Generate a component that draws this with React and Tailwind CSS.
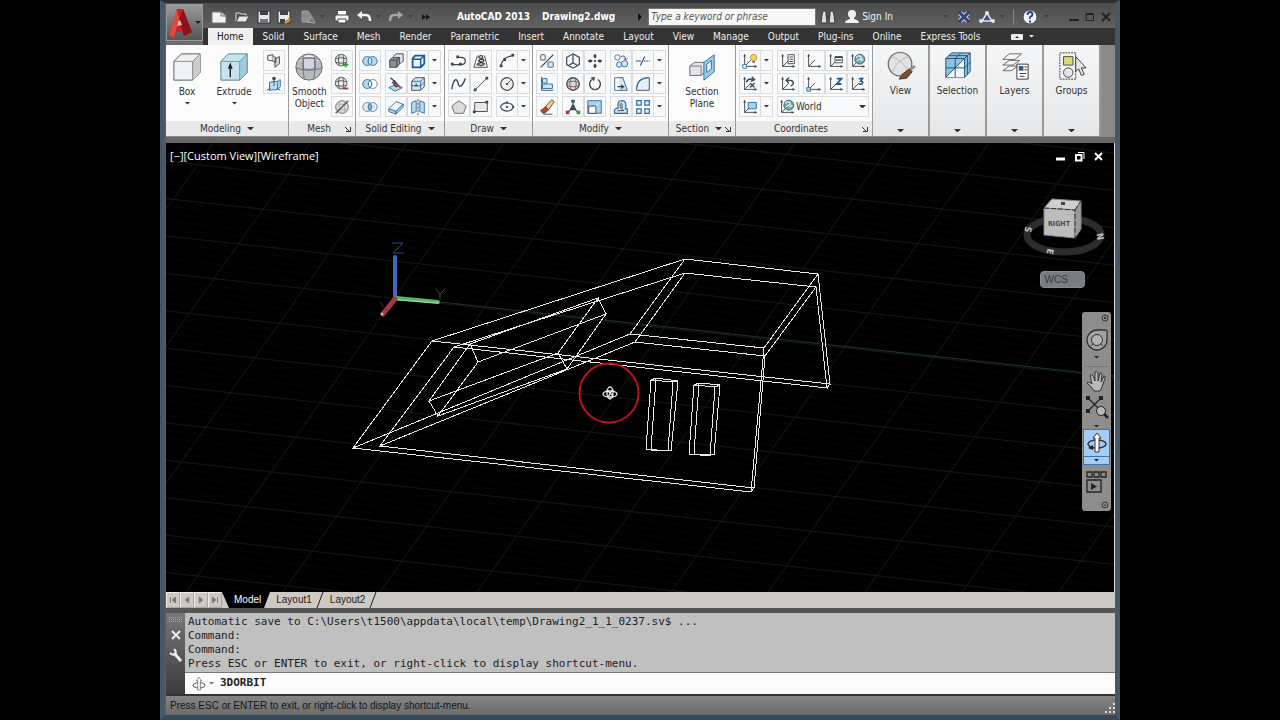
import React, { useState } from 'react';
import clsx from 'clsx';

const INK = '#3f444a';
const BLUE = '#2b6ca3';
const PALE = '#b9dcf0';

const axes = (
    <>
        <path d="M4 3v13h13M4 16l7-7" fill="none" stroke={INK} />
        <path d="M2.5 5L4 2l1.5 3zM15 14.5l3 1.5-3 1.5z" fill={INK} />
    </>
);

const meshBall = (
    <>
        <circle cx="9" cy="9" r="6.5" fill="#e6e7e8" stroke="#555" />
        <path d="M3 7.5q6-2.5 12 0M3 11.5q6 2 12 0M7 3q-2 6 0 12M11 3q2 6 0 12" fill="none" stroke="#555" />
    </>
);

const globe = (
    <>
        <circle cx="12" cy="8" r="5.5" fill="#6fa5ad" stroke="#3c5f70" />
        <path d="M8 6q3-3 5-1t-1 3-3 2M13 10q2-2 3-1" fill="none" stroke="#d8eee2" strokeWidth="1.5" />
    </>
);

const icons = {
    polysolid: (
        <>
            <path d="M3 4l6-1v7l-6-1z" fill="#eee" stroke={INK} />
            <path d="M9 5l3 1v6l-3-2M11 8l5-3v8l-5 4z" fill="#d5d7d9" stroke={INK} />
        </>
    ),
    presspull: (
        <>
            <path d="M5 8l9-1v9l-9 1zM14 7l3-2v8l-3 3" fill={PALE} stroke={BLUE} />
            <path d="M10 12V3M2 17l4-2M17 17l-3-2" fill="none" stroke={INK} />
            <circle cx="10" cy="4" r="2" fill={INK} />
        </>
    ),
    meshMore: (
        <>
            {meshBall}
            <path d="M14 11v6M11 14h6" stroke="#27a02c" strokeWidth="2" />
        </>
    ),
    meshLess: (
        <>
            {meshBall}
            <path d="M11 15h6" stroke="#b92a35" strokeWidth="2" />
        </>
    ),
    meshRefine: (
        <>
            <circle cx="10" cy="10" r="7" fill="#e2e2e2" stroke="#666" />
            <path d="M4 7h11M4 13h12M7 4v12M13 4v12" fill="none" stroke="#aaa" />
            <path d="M3 17L17 3" stroke="#555" strokeWidth="1.5" />
        </>
    ),
    union: (
        <>
            <circle cx="7" cy="10" r="5" fill="#b5d9f4" stroke={BLUE} />
            <circle cx="13" cy="10" r="5" fill="#b5d9f4" stroke={BLUE} />
            <ellipse cx="10" cy="10" rx="2" ry="4" fill="#d8ecfa" stroke={BLUE} />
        </>
    ),
    subtract: (
        <>
            <circle cx="13" cy="10" r="5" fill="#fff" stroke="#5d86ab" />
            <circle cx="7" cy="10" r="5" fill="#b5d9f4" stroke={BLUE} />
            <path d="M10 6q-4 4 0 8 4-4 0-8" fill="#fff" stroke={BLUE} />
        </>
    ),
    intersect: (
        <>
            <circle cx="7" cy="10" r="5" fill="#e4e9ed" stroke="#5d86ab" />
            <circle cx="13" cy="10" r="5" fill="#e4e9ed" stroke="#5d86ab" />
            <path d="M10 6q-4 4 0 8 4-4 0-8" fill="#7fb7e0" stroke={BLUE} />
        </>
    ),
    faces: (
        <>
            <path d="M7 5l3-3h8v8l-3 3" fill="#e4e4e4" stroke={INK} />
            <path d="M3 9l3-3h8v7l-3 4H3z" fill="#8b9095" stroke={INK} />
            <path d="M3 9h8v8M11 9l3-3" fill="none" stroke={INK} />
        </>
    ),
    cubeEdge: (
        <>
            <path d="M4 7l3-3h10v9l-4 4H4z" fill="#eef6fc" stroke="#155a99" strokeWidth="2" />
            <path d="M4 8h9v9M13 8l4-4" fill="none" stroke="#155a99" strokeWidth="1.5" />
        </>
    ),
    imprint: (
        <>
            <path d="M2 14l7-3 8 3-8 4z" fill={PALE} stroke={BLUE} />
            <path d="M4 3l6 6M8 6l5 6-3 1-4-5" fill="#777" stroke={INK} strokeWidth="1.5" />
            <path d="M12 11l3 3" stroke="#b8553c" strokeWidth="2" />
        </>
    ),
    slice: (
        <>
            <path d="M3 7l4-4h10v10l-4 4H3z" fill="#cfe6f5" stroke={INK} />
            <path d="M3 7h10l4-4M13 7v10M3 12h10l4-4" fill="none" stroke={BLUE} />
            <path d="M8 9v3M6 12h4" stroke={INK} />
        </>
    ),
    thicken: (
        <>
            <path d="M2 12l8-8 8 3-8 8z" fill="#f0f6fa" stroke={BLUE} />
            <path d="M2 12v3l8 3v-3zM10 15v3l8-8V7z" fill={PALE} stroke={BLUE} />
        </>
    ),
    mirror3d: (
        <>
            <path d="M3 5l5-2v12l-5 2zM17 5l-5-2v12l5 2z" fill={PALE} stroke={BLUE} />
            <path d="M10 1v18" stroke={INK} strokeDasharray="3 1" />
        </>
    ),
    polyline: (
        <>
            <path d="M2 14h10q5 0 5-4t-5-4H8" fill="none" stroke={INK} strokeWidth="1.3" />
            <path d="M1 12h3v3H1zM10 12h3v3h-3zM7 4h3v3H7z" fill={INK} />
        </>
    ),
    helix: (
        <>
            <path d="M6 4L2 17h15L14 4" fill="none" stroke={INK} />
            <path d="M6 15q-1-3 4-3t3 2-6 0M7 10q1-2 4-2t2 2-6 0M7 6q1-2 3-2t2 2-5 0" fill="none" stroke={INK} strokeWidth="1.5" />
        </>
    ),
    arc: (
        <>
            <path d="M3 16Q5 5 17 4" fill="none" stroke={INK} strokeWidth="1.3" />
            <path d="M2 14h3v3H2zM6 7h3v3H6zM15 2h3v3h-3z" fill={INK} />
        </>
    ),
    spline: <path d="M2 16C4 2 8 4 9 9s4 6 8-5" fill="none" stroke={INK} strokeWidth="1.5" />,
    line: (
        <>
            <path d="M4 16L16 4" stroke={INK} />
            <path d="M2 15h3v3H2zM15 2h3v3h-3z" fill={INK} />
        </>
    ),
    circle: (
        <>
            <circle cx="10" cy="10" r="7" fill="#f0f0f0" stroke={INK} strokeWidth="1.3" />
            <path d="M10 10l4-4" stroke={INK} />
            <path d="M9 9h2v2H9z" fill={INK} />
        </>
    ),
    polygon: <path d="M10 3l8 6-3 8H5L2 9z" fill="#dcdcdc" stroke="#666" />,
    rect: (
        <>
            <path d="M3 5h14v10H3z" fill="#e8e8e8" stroke={INK} />
            <path d="M1 14h3v3H1zM15 3h3v3h-3z" fill={INK} />
        </>
    ),
    ellipse: (
        <>
            <ellipse cx="10" cy="10" rx="7" ry="4.5" fill="#f4f4f4" stroke={INK} strokeWidth="1.3" />
            <path d="M9 9h2v2H9zM9 4h2v2H9zM16 9h2v2h-2z" fill={INK} />
        </>
    ),
    percent: (
        <>
            <rect x="3" y="3" width="5" height="6" rx="1" fill="#f4f4f4" stroke={INK} />
            <rect x="11" y="11" width="6" height="6" rx="1" fill="#cfe6f5" stroke={BLUE} />
            <path d="M3 17L17 3" stroke={INK} strokeWidth="1.3" />
        </>
    ),
    gizmo: (
        <>
            <path d="M10 2l7 4v8l-7 4-7-4V6z" fill="none" stroke={INK} strokeWidth="1.3" />
            <path d="M10 3v9l5 3M10 12l-5 3" fill="none" stroke="#34587a" strokeWidth="1.5" />
        </>
    ),
    move: (
        <>
            <path d="M10 3v4M10 13v4M3 10h4M13 10h4" stroke={INK} strokeWidth="2" />
            <path d="M7.5 5L10 2l2.5 3zM7.5 15l2.5 3 2.5-3zM5 7.5L2 10l3 2.5zM15 7.5l3 2.5-3 2.5zM9 9h2v2H9z" fill={INK} />
        </>
    ),
    copy: (
        <>
            <circle cx="6" cy="6" r="3" fill="#fff" stroke={BLUE} />
            <circle cx="8" cy="14" r="3" fill="#cfe6f5" stroke={BLUE} />
            <circle cx="14" cy="13" r="3.5" fill="#cfe6f5" stroke={BLUE} />
            <path d="M10 5q5-2 5 3M13 7l2 2 2-2" fill="none" stroke={INK} />
        </>
    ),
    trim: (
        <>
            <path d="M2 10h6M7 15l5-10" stroke="#34587a" strokeWidth="1.3" />
            <path d="M11 10h7" stroke={INK} strokeDasharray="2 1" />
        </>
    ),
    align: (
        <>
            <path d="M4 2v15h13" fill="none" stroke={INK} />
            <path d="M5 4h5v5H5zM5 10h11v5H5z" fill="#cfe6f5" stroke={BLUE} />
        </>
    ),
    rotateGizmo: (
        <>
            <circle cx="10" cy="10" r="7" fill="#d8d8d8" stroke={INK} strokeWidth="1.3" />
            <ellipse cx="10" cy="10" rx="3.5" ry="7" fill="none" stroke="#4d6a80" />
            <ellipse cx="10" cy="10" rx="7" ry="3" fill="none" stroke="#9b4343" />
        </>
    ),
    rotate: (
        <>
            <path d="M7 5a6 6 0 1 0 6 0" fill="none" stroke={INK} strokeWidth="1.5" />
            <path d="M5 3l5-1-1 5z" fill={INK} />
        </>
    ),
    stretch: (
        <>
            <path d="M3 3h9v14H3z" fill="#fff" stroke={BLUE} />
            <path d="M8 3h4l5 14H8" fill="#cfe6f5" stroke={BLUE} />
            <path d="M6 13h6M10 11l3 2-3 2" fill="none" stroke={INK} strokeWidth="1.3" />
        </>
    ),
    fillet: (
        <>
            <path d="M3 17V14Q4 4 15 3h2v14z" fill="#e6f1f8" stroke={INK} />
            <path d="M3 14Q4 4 15 3" fill="none" stroke={BLUE} strokeWidth="1.5" />
        </>
    ),
    erase: (
        <>
            <path d="M8 10l7-8 3 2-6 9z" fill="#e9c9a0" stroke="#7a4a2a" />
            <path d="M3 14l5-4 4 3-5 4q-3 0-4-3z" fill="#b24a32" stroke="#7a3525" />
            <path d="M6 18h10" stroke={INK} />
        </>
    ),
    scaleGizmo: (
        <>
            <path d="M10 3v8M10 11l-6 5M10 11l6 5M7 13h6l-3-6z" fill="#bbb" stroke={INK} strokeWidth="1.3" />
            <path d="M2 14h4v4H2z" fill="#b83838" />
            <path d="M14 14h4v4h-4z" fill="#2f9a3a" />
            <path d="M8 2h4v3H8z" fill="#34587a" />
        </>
    ),
    scale: (
        <>
            <path d="M2 3h15v14H2z" fill="#a5d3ee" stroke={BLUE} />
            <path d="M3 9h8v8H3z" fill="#fff" stroke={INK} />
            <path d="M11 9l4-4" stroke="#fff" />
        </>
    ),
    offset: (
        <>
            <path d="M3 17q-2-5 4-6-2-8 4-8t4 9h2v5z" fill="#cfe6f5" stroke={BLUE} strokeWidth="1.3" />
            <path d="M6 14h7l-2-2q1-6-1-6t0 6" fill="none" stroke={INK} />
        </>
    ),
    array: (
        <path d="M3 3h5v5H3zM12 3h5v5h-5zM3 12h5v5H3zM12 12h5v5h-5z" fill="#e3f1fa" stroke={BLUE} strokeWidth="1.3" />
    ),
    ucsLight: (
        <>
            {axes}
            <circle cx="14" cy="6" r="3.5" fill="#f4d25a" stroke="#c69325" />
            <path d="M12.5 10h3v2h-3z" fill="#777" />
            <path d="M2 14h4v4H2z" fill="#fff" stroke={BLUE} />
        </>
    ),
    ucsX: (
        <>
            {axes}
            <path d="M6 8q2-5 7-3M12 2l3 3-4 2" fill="none" stroke={INK} strokeWidth="1.5" />
            <path d="M10 9l5 5M15 9l-5 5" stroke="#1b4f86" strokeWidth="1.5" />
        </>
    ),
    ucsFace: (
        <>
            {axes}
            <path d="M8 5h9v7H8z" fill="#a5d3ee" stroke={BLUE} />
        </>
    ),
    ucsNamed: (
        <>
            {axes}
            <path d="M10 3h7v10h-7z" fill="#fff" stroke={INK} />
            <path d="M11.5 5.5h4M11.5 8h4M11.5 10.5h4" stroke={INK} />
        </>
    ),
    ucsBack: (
        <>
            {axes}
            <path d="M9 6h4q3 1 3 3t-3 3M11 3L8 6l3 3" fill="none" stroke={INK} strokeWidth="1.5" />
        </>
    ),
    ucs: axes,
    ucsOrigin: (
        <>
            {axes}
            <path d="M2 14h4v4H2z" fill={PALE} stroke={BLUE} />
        </>
    ),
    ucsView: (
        <>
            {axes}
            <path d="M9 5h8v7H9z" fill="#fff" stroke={INK} />
            <path d="M9 6h8M10 9h6" stroke={INK} strokeWidth="1.5" />
        </>
    ),
    ucsWorld: (
        <>
            {axes}
            {globe}
        </>
    ),
    ucsZ: (
        <>
            {axes}
            <path d="M11 4h5l-5 6h5" fill="none" stroke="#1b5a93" strokeWidth="2" />
        </>
    ),
    ucs3: (
        <>
            {axes}
            <path d="M11 4h4l-2 3q3 0 2 2t-4 1" fill="none" stroke="#1b5a93" strokeWidth="1.8" />
        </>
    ),
};

const menuTabs = [
    'Home', 'Solid', 'Surface', 'Mesh', 'Render', 'Parametric', 'Insert', 'Annotate',
    'Layout', 'View', 'Manage', 'Output', 'Plug-ins', 'Online', 'Express Tools',
];

const solidEditing = [
    { rows: [['union'], ['subtract'], ['intersect']] },
    { rows: [['faces', 'cubeEdge'], ['imprint', 'slice'], ['thicken', 'mirror3d']], drop: true },
];

const draw = [
    { rows: [['polyline', 'helix'], ['spline', 'line'], ['polygon', 'rect']] },
    { rows: [['arc'], ['circle'], ['ellipse']], drop: true },
];

const modify = [
    { rows: [['percent'], ['align'], ['erase']] },
    { rows: [['gizmo', 'move'], ['rotateGizmo', 'rotate'], ['scaleGizmo', 'scale']] },
    { rows: [['copy', 'trim'], ['stretch', 'fillet'], ['offset', 'array']], drop: true },
];

const history = [
    'Automatic save to C:\\Users\\t1500\\appdata\\local\\temp\\Drawing2_1_1_0237.sv$ ...',
    'Command:',
    'Command:',
    'Press ESC or ENTER to exit, or right-click to display shortcut-menu.',
];

function Caret({ className }) {
    return (
        <svg viewBox="0 0 8 4" className={clsx('shrink-0', className)} aria-hidden="true">
            <path d="M0 0h8L4 4z" fill="currentColor" />
        </svg>
    );
}

function ToolButton({ name }) {
    return (
        <button
            type="button"
            aria-label={name}
            className="flex h-[21px] w-[22px] items-center justify-center border border-[#d9dbdd] bg-[#f8f9fa] hover:bg-[#dcecf8]"
        >
            <svg viewBox="0 0 20 20" className="h-[18px] w-[18px] shrink-0">{icons[name]}</svg>
        </button>
    );
}

function ToolGroup({ rows, drop }) {
    return (
        <div className="flex flex-col gap-0.5">
            {rows.map((row) => (
                <div key={row[0]} className="flex">
                    {row.map((name) => <ToolButton key={name} name={name} />)}
                    {drop && (
                        <button
                            type="button"
                            aria-label={`${row[0]} options`}
                            className="flex w-3 items-center justify-center border border-l-0 border-[#d9dbdd] bg-[#f8f9fa] text-[#333]"
                        >
                            <Caret className="w-[5px]" />
                        </button>
                    )}
                </div>
            ))}
        </div>
    );
}

function Panel({ title, width, menu, launcher, children }) {
    return (
        <section className={clsx('flex shrink-0 flex-col border-r border-[#9a9a9a] bg-[#fbfbfb]', width)}>
            <div className="flex flex-1 items-start gap-1 px-[3px] pt-[5px]">{children}</div>
            <footer className="flex h-[15px] items-center bg-[#e9e9e9] px-1">
                <button type="button" className="flex flex-1 items-center justify-center gap-1.5 whitespace-nowrap">
                    {title}
                    {menu && <Caret className="w-[7px]" />}
                </button>
                {launcher && (
                    <svg viewBox="0 0 6 6" className="h-1.5 w-1.5 shrink-0">
                        <path d="M0 1l4 4M5.5 1v4.5H1" fill="none" stroke="#333" />
                    </svg>
                )}
            </footer>
        </section>
    );
}

function BigButton({ label, drop, width, children }) {
    return (
        <button type="button" className={clsx('flex flex-col items-center leading-3', width)}>
            <svg viewBox="0 0 32 32" className="mt-0.5 mb-1 h-[30px] w-[30px]">{children}</svg>
            <span>{label}</span>
            {drop && <Caret className="mt-1 w-[5px]" />}
        </button>
    );
}

function TallPanel({ label, children }) {
    return (
        <button
            type="button"
            className="flex w-[57px] shrink-0 flex-col items-center border-r-2 border-[#9a9a9a] bg-linear-to-b from-[#f5f6f7] to-[#e6e7e8] pt-1 pb-1"
        >
            <svg viewBox="0 0 32 32" className="mt-0.5 h-[30px] w-[30px]">{children}</svg>
            <span className="mt-1 leading-3">{label}</span>
            <Caret className="mt-auto w-[7px]" />
        </button>
    );
}

function TitleBar() {
    return (
        <div className="flex h-[25px] items-center pt-0.5 text-[#f0f0f0]">
            <div className="flex items-center pl-1">
                <button type="button" aria-label="New" className="w-[25px] px-1">
                    <svg viewBox="0 0 16 16" className="h-4 w-4">
                        <path d="M1 3h9l5 4v7H1z" fill="#f2f2f2" stroke="#777" />
                        <path d="M10 3v4h5" fill="#ccc" stroke="#777" />
                    </svg>
                </button>
                <button type="button" aria-label="Open" className="w-[22px] px-0.5">
                    <svg viewBox="0 0 16 16" className="h-4 w-4">
                        <path d="M2 13V4h4l1 1h5v2" fill="#555" stroke="#ddd" />
                        <path d="M2 13l3-6h10l-3 6z" fill="#e8e8e8" stroke="#444" />
                    </svg>
                </button>
                <button type="button" aria-label="Save" className="w-5 px-0.5">
                    <svg viewBox="0 0 16 16" className="h-4 w-4">
                        <path d="M2 2h12v12H2z" fill="#e7e7e7" stroke="#333" />
                        <path d="M4 2h8v4H4z" fill="#39424d" />
                        <path d="M4 10h8v4H4z" fill="#6b7784" />
                    </svg>
                </button>
                <button type="button" aria-label="Save As" className="w-[22px] px-0.5">
                    <svg viewBox="0 0 16 16" className="h-4 w-4">
                        <path d="M2 2h12v12H2z" fill="#e7e7e7" stroke="#333" />
                        <path d="M4 2h8v4H4zM4 10h5v4H4z" fill="#39424d" />
                        <path d="M8 14l6-5 1 2-5 4z" fill="#f0b840" stroke="#7d5a1c" />
                    </svg>
                </button>
                <button type="button" aria-label="Open sheet set" className="flex w-[34px] items-center gap-1 pl-1 text-[#3a3a3a]">
                    <svg viewBox="0 0 16 16" className="h-4 w-4">
                        <path d="M2 2h6l3 4v7H2z" fill="#8c8c8c" stroke="#9d9d9d" />
                        <path d="M7 13l5-5 3 6z" fill="#777" stroke="#aaa" />
                    </svg>
                    <Caret className="w-[5px]" />
                </button>
                <button type="button" aria-label="Plot" className="w-6 px-1">
                    <svg viewBox="0 0 16 16" className="h-4 w-4">
                        <path d="M4 2h8v4H4z" fill="#fff" />
                        <path d="M1 6h14v6H1z" fill="#f2f2f2" stroke="#444" />
                        <path d="M4 10h8v4H4z" fill="#fff" stroke="#444" />
                    </svg>
                </button>
                <button type="button" aria-label="Undo" className="flex w-8 items-center gap-1 px-0.5 text-[#3a3a3a]">
                    <svg viewBox="0 0 16 16" className="h-4 w-4">
                        <path d="M4 6h6q4 0 4 6" fill="none" stroke="#f4f4f4" strokeWidth="2.5" />
                        <path d="M1 6l5-4v8z" fill="#f4f4f4" />
                    </svg>
                    <Caret className="w-[5px]" />
                </button>
                <button type="button" aria-label="Redo" className="flex w-8 items-center gap-1 px-0.5 text-[#3a3a3a]">
                    <svg viewBox="0 0 16 16" className="h-4 w-4">
                        <path d="M12 6H6q-4 0-4 6" fill="none" stroke="#a5a5a5" strokeWidth="2.5" />
                        <path d="M15 6l-5-4v8z" fill="#a5a5a5" />
                    </svg>
                    <Caret className="w-[5px]" />
                </button>
                <button type="button" aria-label="Customize Quick Access Toolbar" className="w-4 pl-1">
                    <svg viewBox="0 0 8 6" className="h-1.5 w-2">
                        <path d="M0 0l4 3-4 3zM4 0l4 3-4 3z" fill="#151515" />
                    </svg>
                </button>
            </div>

            <h1 className="flex flex-1 justify-center gap-3 font-bold whitespace-pre text-white">
                <span>AutoCAD 2013</span>
                <span>Drawing2.dwg</span>
            </h1>

            <svg viewBox="0 0 4 8" className="mr-1.5 h-2 w-1"><path d="M0 0l4 4-4 4z" fill="#111" /></svg>
            <input
                type="text"
                aria-label="Search help"
                placeholder="Type a keyword or phrase"
                className="h-[18px] w-[168px] border border-[#777] bg-[#f7f7f7] px-0.5 italic placeholder:text-[#555] focus:outline-none"
            />
            <button type="button" aria-label="Search" className="w-6 pl-1">
                <svg viewBox="0 0 16 16" className="h-4 w-4">
                    <path d="M3 2h3v3l1 9H1l1-8zM10 2h3l1 4 1 8H9l1-9z" fill="#ddd" stroke="#333" />
                    <path d="M6 6h4v3H6z" fill="#444" />
                </svg>
            </button>
            <button type="button" className="flex items-center gap-0.5 pl-1 whitespace-nowrap">
                <svg viewBox="0 0 16 16" className="h-4 w-4">
                    <circle cx="8" cy="5" r="4" fill="#f2f2f2" />
                    <path d="M1 14q0-3 5-4V8h4v2q5 1 5 4z" fill="#f2f2f2" />
                </svg>
                Sign In
            </button>

            <div className="flex w-[222px] shrink-0 items-center pl-[50px] text-[#3a3a3a]">
                <Caret className="w-[5px]" />
                <button type="button" aria-label="Exchange" className="ml-2">
                    <svg viewBox="0 0 16 16" className="h-4 w-4">
                        <path d="M4 4l8 8M12 4l-8 8" stroke="#c9cfe4" strokeWidth="5" />
                        <path d="M3 3l10 10M13 3L3 13" stroke="#30417c" strokeWidth="3" />
                    </svg>
                </button>
                <button type="button" aria-label="Stay connected" className="ml-1.5 flex items-center gap-1">
                    <svg viewBox="0 0 18 16" className="h-4 w-[18px]">
                        <path d="M9 4L4 12h10z" fill="#40517e" stroke="#dfe4f2" strokeWidth="1.5" />
                        <circle cx="9" cy="4" r="2" fill="#dfe4f2" />
                        <circle cx="3" cy="12" r="2" fill="#dfe4f2" />
                        <circle cx="15" cy="12" r="2" fill="#dfe4f2" />
                    </svg>
                    <Caret className="w-[5px]" />
                </button>
                <button type="button" aria-label="Help" className="ml-2 flex items-center gap-1.5 border-l border-[#888] pl-2">
                    <svg viewBox="0 0 16 16" className="h-4 w-4">
                        <circle cx="8" cy="8" r="7" fill="#f3f5fa" stroke="#39466c" />
                        <path d="M5.5 6q0-3 2.5-3t2.5 2.5Q10.500 7 8 8v2" fill="none" stroke="#27407f" strokeWidth="1.8" />
                        <path d="M7 11.5h2v2H7z" fill="#27407f" />
                    </svg>
                    <Caret className="w-[5px]" />
                </button>
                <div className="ml-auto flex items-center gap-1.5 pr-1">
                    <button type="button" aria-label="Minimize">
                        <svg viewBox="0 0 10 10" className="h-2.5 w-2.5"><path d="M0 8h10" stroke="#222" strokeWidth="2" /></svg>
                    </button>
                    <button type="button" aria-label="Maximize">
                        <svg viewBox="0 0 10 10" className="h-2.5 w-2.5"><path d="M1 1.5h7.5v7H1zM1 2.5h8" fill="none" stroke="#222" /></svg>
                    </button>
                    <button type="button" aria-label="Close">
                        <svg viewBox="0 0 10 10" className="h-2.5 w-2.5"><path d="M1 1l8 8M9 1L1 9" stroke="#222" strokeWidth="2" /></svg>
                    </button>
                </div>
            </div>
        </div>
    );
}

function Ribbon() {
    return (
        <div className="flex h-[92px] overflow-hidden border-b border-[#888] bg-linear-to-r from-[#c8c8c8] to-[#8a8a8a] text-[#333]">
            <Panel title="Modeling" width="w-[123px]" menu>
                <BigButton label="Box" width="w-9" drop>
                    <path d="M2 10l8-8h20v20l-8 8H2z" fill="#f1f2f4" stroke="#555" />
                    <path d="M22 10l8-8v20l-8 8z" fill="#c9ccd0" />
                    <path d="M2 10h20v20M22 10l8-8" fill="none" stroke="#888" />
                </BigButton>
                <BigButton label="Extrude" width="w-[50px]" drop>
                    <path d="M2 10l8-8h20v20l-8 8H2z" fill="#c4e4ef" stroke="#4f7f93" />
                    <path d="M22 10l8-8v20l-8 8zM2 10h20" fill="#9fcbdb" stroke="#6d9cae" />
                    <path d="M12 27V15M10.5 17l1.500-4 1.500 4z" fill="#222" stroke="#222" strokeWidth="1.5" />
                </BigButton>
                <ToolGroup rows={[['polysolid'], ['presspull']]} />
            </Panel>
            <Panel title="Mesh" width="w-[67px]" launcher>
                <BigButton label={<>Smooth<br />Object</>} width="w-9">
                    <circle cx="16" cy="16" r="14" fill="#b9bbbe" stroke="#666" />
                    <path d="M4 10q12-13 24 0-12-5-24 0z" fill="#f4f4f4" />
                    <path d="M2 17q14 5 28 0M5 8q11-4 22 0M10 4q-2 12 1 25M22 4q2 12-1 25" fill="none" stroke="#6a6e74" />
                    <path d="M10 7q6-1 12 0v11q-6 1-12 0z" fill="#d3d6e0" stroke="#6a6e74" />
                </BigButton>
                <ToolGroup rows={[['meshMore'], ['meshLess'], ['meshRefine']]} />
            </Panel>
            <Panel title="Solid Editing" width="w-[89px]" menu>
                {solidEditing.map((group, i) => <ToolGroup key={i} {...group} />)}
            </Panel>
            <Panel title="Draw" width="w-[88px]" menu>
                {draw.map((group, i) => <ToolGroup key={i} {...group} />)}
            </Panel>
            <Panel title="Modify" width="w-[136px]" menu>
                {modify.map((group, i) => <ToolGroup key={i} {...group} />)}
            </Panel>
            <Panel title="Section" width="w-[67px]" menu launcher>
                <BigButton label={<>Section<br />Plane</>} width="w-[60px]">
                    <path d="M3 15l5-4h12v10l-5 4H3z" fill="#e2e4e8" stroke="#666" />
                    <path d="M3 15h12v10" fill="none" stroke="#777" />
                    <path d="M18 11l11-8v18l-11 9z" fill="#9ccbe6" stroke={BLUE} />
                    <path d="M21 13l5-4v9l-5 4z" fill="#e9f5fc" stroke={BLUE} />
                </BigButton>
            </Panel>
            <Panel title="Coordinates" width="w-[137px]" launcher>
                <ToolGroup rows={[['ucsLight'], ['ucsX'], ['ucsFace']]} drop />
                <div className="flex flex-col gap-0.5">
                    <div className="flex gap-1">
                        <ToolGroup rows={[['ucsNamed'], ['ucsBack']]} />
                        <ToolGroup rows={[['ucs', 'ucsView', 'ucsWorld'], ['ucsOrigin', 'ucsZ', 'ucs3']]} />
                    </div>
                    <label className="flex h-[21px] w-[92px] items-center border border-[#d9dbdd] bg-[#f8f9fa]">
                        <svg viewBox="0 0 20 20" className="h-[18px] w-[18px] shrink-0">{icons.ucsWorld}</svg>
                        <select aria-label="Current UCS" className="min-w-0 flex-1 appearance-none">
                            <option>World</option>
                        </select>
                        <Caret className="mr-0.5 w-[7px]" />
                    </label>
                </div>
            </Panel>
            <TallPanel label="View">
                <circle cx="15" cy="14" r="12.5" fill="#e2e3e4" stroke="#777" strokeWidth="1.5" />
                <path d="M6 6q12 4 18 16M24 6Q11 10 7 22" fill="none" stroke="#b5b8ba" />
                <path d="M17 25l8-6 3 3-6 7-8 1z" fill="#7e4f2c" stroke="#4f3320" />
                <path d="M26 20l5-4" stroke="#9c8a78" strokeWidth="3" />
            </TallPanel>
            <TallPanel label="Selection">
                <path d="M3 8l6-6h20v20l-6 6H3z" fill="#8cc4e6" stroke="#274a68" />
                <path d="M23 8v20H3z" fill="#f0f5f8" />
                <path d="M3 8h20v20M23 8l6-6M3 18h20l6-6M13 8v20M13 8l6-6M3 28L23 8M6 5h20v20" fill="none" stroke="#274a68" />
            </TallPanel>
            <TallPanel label="Layers">
                <path d="M3 9l7-6h13l-7 6zM3 15l7-5h11l-7 5zM3 21l7-5h9l-7 5z" fill="#f5f5f5" stroke="#666" />
                <path d="M18 14h12v16H18z" fill="#fff" stroke="#333" />
                <path d="M20 16h5v5h-5z" fill="#2e5e95" />
                <path d="M26 17h3M26 20h3M21 24h7M21 27h5" stroke="#333" />
            </TallPanel>
            <TallPanel label="Groups">
                <path d="M3 2h17v28H3z" fill="none" stroke="#333" strokeDasharray="2 1" />
                <path d="M7 6h10v9H7z" fill="#e3d970" stroke="#444" />
                <circle cx="12" cy="23" r="5" fill="#dfe5ea" stroke="#444" />
                <path d="M20 6l11 12h-5l3 7-3 1-3-7-3 3z" fill="#e8e8e8" stroke="#333" />
            </TallPanel>
        </div>
    );
}

const house = [
    'M432 341L685 259L818 274L764 348L630 334L353 448Z',
    'M454 347L685 273L816 287L765 356L635 342L380 446Z',
    'M432 341L830 384L818 274M454 347L827 388L816 287M830 384L827 388',
    'M353 448L751 492L764 348M380 446L754 488L765 356M751 492L754 488',
    'M685 259L630 334M685 273L635 342',
    'M470 344L598 298L558 353L429 401ZM478 362L606 314L567 369L438 416Z',
    'M470 344L478 362M598 298L606 314M558 353L567 369M429 401L438 416',
    'M651 380L673 382L668 451L646 449ZM656 378L678 381L671 451L651 450Z',
    'M651 380L656 378M673 382L678 381M646 449L651 450',
    'M694 385L715 387L710 456L689 454ZM699 383L720 385L714 455L694 454Z',
    'M694 385L699 383M715 387L720 385M689 454L694 454',
];

function Drawing() {
    const rows = Array.from({ length: 16 }, (_, k) => 49 + k * 37.4);
    const minorRows = rows.flatMap((y) => [1, 2, 3, 4].map((n) => y + n * 7.5));
    const columns = Array.from({ length: 14 }, (_, k) => 116 + k * 97);

    return (
        <svg viewBox="166 143 948 449" preserveAspectRatio="xMidYMid slice" className="absolute inset-0 h-full w-full">
            <g stroke="#060606">
                {minorRows.map((y) => <path key={y} d={`M166 ${y}l948 104`} />)}
            </g>
            <g stroke="#171919">
                {rows.map((y) => <path key={y} d={`M166 ${y}l948 104`} />)}
                {columns.map((x) => <path key={x} d={`M${x} 143l-318 449`} />)}
            </g>
            <path d="M440 302L1114 376" stroke="#1c3833" />

            <g fill="none" stroke="#e8e8e8" shapeRendering="crispEdges">
                {house.map((d) => <path key={d} d={d} />)}
            </g>

            <g strokeLinecap="round" fill="none">
                <path d="M395 297V257" stroke="#3f68bd" strokeWidth="4" />
                <path d="M396 298L438 302" stroke="#58b868" strokeWidth="4" />
                <path d="M397 300L438 303" stroke="#a8e0ae" />
                <path d="M395 299L383 314" stroke="#a33a40" strokeWidth="5" />
                <circle cx="382" cy="314" r="1.5" fill="#e8a0a0" />
                <path d="M392 243h11l-10 10h11" stroke="#2a42a8" />
                <path d="M436 289l4 5 5-5M440 294v5" stroke="#25622c" />
                <path d="M380 302l6 8" stroke="#6d1a20" />
            </g>

            <circle cx="609" cy="393" r="29.5" fill="none" stroke="#c0101c" strokeWidth="2" />
            <g fill="none" stroke="#f0f0f0" strokeWidth="1.3">
                <ellipse cx="610" cy="394" rx="7" ry="3" />
                <ellipse cx="610" cy="393" rx="3" ry="6" />
                <path d="M607 390l6 6M613 389l-5 8" />
            </g>
        </svg>
    );
}

function ViewCube() {
    return (
        <svg viewBox="0 0 84 62" className="h-[62px] w-[84px]">
            <ellipse cx="42" cy="38" rx="37" ry="17" fill="none" stroke="#2c2c2c" strokeWidth="7" />
            <path d="M21 11l10-9h27v27l-6 12-31-3z" fill="#050505" />
            <path d="M22 11l8-9 29 2-6 9z" fill="#cfcfcf" stroke="#888" />
            <path d="M22 11l31 2v28l-31-3z" fill="#bcbcbc" stroke="#888" />
            <path d="M53 13l6-9v28l-6 9z" fill="#9b9b9b" stroke="#888" />
            <path d="M22 11l31 2v28M53 13l6-9" fill="none" stroke="#333" strokeDasharray="5 2" />
            <path d="M39 5h4v3h-4z" fill="#444" />
            <text x="26" y="29" fontSize="7" fontWeight="bold" fill="#4a4a4a">RIGHT</text>
            <g fontSize="9" fontWeight="bold" fill="#c4c4c4" textAnchor="middle">
                <text transform="translate(3 32) rotate(100)">S</text>
                <text transform="translate(25 54) rotate(100)">E</text>
                <text transform="translate(75 40) rotate(80)">N</text>
            </g>
        </svg>
    );
}

function NavBar() {
    return (
        <nav aria-label="Navigation bar" className="flex w-[29px] flex-col items-center rounded-[3px] bg-[#8d8d8d] text-[#222]">
            <button type="button" aria-label="Close navigation bar" className="mt-0.5 mr-0.5 self-end">
                <svg viewBox="0 0 8 8" className="h-2 w-2">
                    <circle cx="4" cy="4" r="3" fill="none" stroke="#333" />
                    <path d="M3 3l2 2M5 3L3 5" stroke="#333" />
                </svg>
            </button>
            <button type="button" aria-label="Steering wheel" className="mt-1.5 flex h-[38px] flex-col items-center gap-1">
                <svg viewBox="0 0 24 24" className="h-6 w-6">
                    <path d="M12 2h8q2 0 2 2v8a10 10 0 1 1-10-10z" fill="#a2a2a2" stroke="#333" strokeWidth="1.3" />
                    <circle cx="12" cy="12" r="5.5" fill="#b4b4b4" stroke="#333" />
                    <path d="M6 18l3-3M18 18l-3-3" stroke="#333" />
                </svg>
                <Caret className="w-[5px]" />
            </button>
            <button type="button" aria-label="Pan" className="border-t border-[#777] pt-0.5">
                <svg viewBox="0 0 24 24" className="h-6 w-6">
                    <path
                        d="M9 22q-2-4-7-8 1-2 5 1L5 6q2-1 3 1l2 5V3q2-1 3 1v8l2-8q2 0 2 1l-1 8 3-6q2 0 1 2l-3 9-2 4z"
                        fill="#b9b9b9"
                        stroke="#333"
                    />
                </svg>
            </button>
            <button type="button" aria-label="Zoom extents" className="flex h-[36px] flex-col items-center justify-between pt-0.5 pb-0.5">
                <svg viewBox="0 0 24 24" className="h-6 w-6">
                    <path d="M3 3l14 14M16 3L3 16" stroke="#222" strokeWidth="1.3" />
                    <path d="M1 1h4v4H1zM14 1h4v4h-4zM1 14h4v4H1z" fill="#222" />
                    <circle cx="16" cy="16" r="4.5" fill="#b5b5b5" stroke="#222" />
                    <path d="M19 19l4 4" stroke="#222" strokeWidth="2.5" />
                </svg>
                <Caret className="w-[5px]" />
            </button>
            <button type="button" aria-label="Orbit" className="flex h-[36px] w-[27px] flex-col items-center border border-[#3f74ad] bg-[#a5cdf3]">
                <svg viewBox="0 0 24 24" className="h-[26px] w-6">
                    <ellipse cx="12" cy="13" rx="9" ry="4" fill="none" stroke="#333" strokeWidth="1.5" />
                    <path d="M10 7v14h4V7h2l-4-5-4 5z" fill="#fff" stroke="#333" />
                    <path d="M8 14v5l-5-2z" fill="#222" />
                </svg>
                <span className="flex w-full flex-1 items-center justify-center border-t border-[#3f74ad]">
                    <Caret className="w-[5px]" />
                </span>
            </button>
            <button type="button" aria-label="ShowMotion" className="mt-1">
                <svg viewBox="0 0 24 26" className="h-[26px] w-6">
                    <path d="M2 3h5v5H2zM9 3h5v5H9zM16 3h5v5h-5zM2 11h14v12H2z" fill="none" stroke="#222" strokeWidth="1.3" />
                    <path d="M6 14l6 3.500L6 21z" fill="#222" />
                </svg>
            </button>
            <button type="button" aria-label="Customize navigation bar" className="mt-1.5 mr-0.5 mb-0.5 self-end">
                <svg viewBox="0 0 8 8" className="h-2 w-2">
                    <circle cx="4" cy="4" r="3" fill="none" stroke="#333" />
                    <path d="M2.5 3.5h3L4 5.5z" fill="#333" />
                </svg>
            </button>
        </nav>
    );
}

function Viewport() {
    return (
        <main className="relative min-h-0 flex-1 overflow-hidden border-r border-[#e0e0e0] bg-black text-white">
            <Drawing />
            <p className="absolute top-[5px] left-1 font-['Open_Sans','Noto_Sans',sans-serif] text-[11px] leading-4">
                [−][Custom View][Wireframe]
            </p>
            <div className="absolute top-2 right-2.5 flex gap-2">
                <button type="button" aria-label="Minimize drawing">
                    <svg viewBox="0 0 11 11" className="h-[11px] w-[11px]"><path d="M1 8h9" stroke="#fff" strokeWidth="3" /></svg>
                </button>
                <button type="button" aria-label="Restore drawing">
                    <svg viewBox="0 0 11 11" className="h-[11px] w-[11px]">
                        <path d="M2 4h5.5v5.5H2z" fill="none" stroke="#fff" strokeWidth="2" />
                        <path d="M4 1.5h6V8" fill="none" stroke="#fff" />
                    </svg>
                </button>
                <button type="button" aria-label="Close drawing">
                    <svg viewBox="0 0 11 11" className="h-[11px] w-[11px]"><path d="M2 2l7 7M9 2L2 9" stroke="#fff" strokeWidth="2" /></svg>
                </button>
            </div>
            <div className="absolute top-[54px] right-2 flex flex-col items-center">
                <ViewCube />
                <button type="button" className="mt-3 mr-1 h-[17px] w-[45px] rounded-[4px] border border-[#858b90] bg-[#7a7d80] pl-1 text-left font-['Liberation_Sans',sans-serif] text-[10px] leading-[14px] text-[#3a3a3a]">
                    WCS
                </button>
            </div>
            <div className="absolute top-[169px] right-[3px]">
                <NavBar />
            </div>
        </main>
    );
}

function LayoutTabs() {
    return (
        <div className="flex h-4 items-center bg-[#cdcac3] font-['Liberation_Sans',sans-serif] text-[#222]">
            {['M4 2v7M10 2L6 5.5 10 9z', 'M9 2L5 5.5 9 9z', 'M5 2l4 3.5L5 9z', 'M4 2l4 3.5L4 9zM10 2v7'].map((d) => (
                <button key={d} type="button" aria-label="Scroll layouts" className="h-4 w-3.5 border border-[#a9a69f] border-t-[#eee] border-l-[#eee]">
                    <svg viewBox="0 0 14 11" className="h-full w-full"><path d={d} fill="#77746e" stroke="#77746e" /></svg>
                </button>
            ))}
            <svg viewBox="0 0 8 16" className="h-4 w-2"><path d="M0 0h8v16H7z" fill="#000" /></svg>
            <button type="button" className="h-4 bg-black pr-px pl-1 leading-4 text-white">Model</button>
            <svg viewBox="0 0 8 16" className="h-4 w-2"><path d="M0 0h8L2 16H0z" fill="#000" /></svg>
            <button type="button" className="pr-1 pl-1.5 leading-4">Layout1</button>
            <svg viewBox="0 0 8 16" className="h-4 w-2"><path d="M7 0L1 16" stroke="#222" /></svg>
            <button type="button" className="pr-1 pl-1.5 leading-4">Layout2</button>
            <svg viewBox="0 0 8 16" className="h-4 w-2"><path d="M7 0L1 16" stroke="#222" /></svg>
        </div>
    );
}

function CommandLine() {
    return (
        <div className="flex border-t-[5px] border-b-2 border-[#555] border-b-[#333] font-['DejaVu_Sans_Mono',monospace] text-[11px] text-[#222]">
            <div className="flex w-[19px] shrink-0 flex-col items-center gap-2 bg-linear-to-b from-[#777] to-[#3c3c3c] pt-1">
                <svg viewBox="0 0 14 5" className="h-[5px] w-3.5"><path d="M0 .5h14M0 2.500h14M0 4.500h14" stroke="#aaa" strokeDasharray="1 1" /></svg>
                <button type="button" aria-label="Close command line">
                    <svg viewBox="0 0 10 10" className="h-2.5 w-2.5"><path d="M1 1l8 8M9 1L1 9" stroke="#eee" strokeWidth="2" /></svg>
                </button>
                <button type="button" aria-label="Customize command line">
                    <svg viewBox="0 0 14 14" className="h-3.5 w-3.5">
                        <path d="M5 5l7 8" stroke="#eee" strokeWidth="3" />
                        <path d="M5 1Q8 4 6 6T1 5" fill="none" stroke="#eee" strokeWidth="2" />
                    </svg>
                </button>
            </div>
            <div className="min-w-0 flex-1">
                <div className="h-[60px] overflow-hidden border-b border-[#777] bg-[#c0c0c0] px-[3px] pt-0.5 leading-[14px]">
                    {history.map((line, i) => <p key={i} className="whitespace-pre">{line}</p>)}
                </div>
                <div className="flex h-[21px] items-center bg-[#fcfcfc] pl-1.5">
                    <svg viewBox="0 0 24 24" className="h-4 w-4">
                        <ellipse cx="12" cy="14" rx="9" ry="4" fill="none" stroke="#555" strokeWidth="1.5" />
                        <path d="M10 7v14h4V7h2l-4-5-4 5z" fill="#fff" stroke="#555" />
                    </svg>
                    <Caret className="ml-0.5 w-[5px] text-[#777]" />
                    <input
                        type="text"
                        aria-label="Command"
                        defaultValue="3DORBIT"
                        className="ml-1.5 min-w-0 flex-1 bg-transparent font-bold focus:outline-none"
                    />
                </div>
            </div>
        </div>
    );
}

export default function App() {
    const [activeTab, setActiveTab] = useState('Home');

    return (
        <div className="h-screen bg-black px-[12.5%] font-['DejaVu_Sans_Condensed','DejaVu_Sans',sans-serif] text-[10px]">
            <div className="flex h-full flex-col border-x-[5px] border-t-[3px] border-b-[5px] border-[#465866] border-t-[#2c2e30] border-b-[#34495a] bg-[#5f5f5f] pl-px">
                <header className="flex bg-linear-to-b from-[#4d4d4d] to-[#6e6e6e]">
                    <button
                        type="button"
                        aria-label="Application menu"
                        className="mt-px flex h-[37px] w-[37px] shrink-0 items-center border border-[#999] bg-linear-to-b from-[#9a9a9a] to-[#555]"
                    >
                        <svg viewBox="0 0 28 34" className="h-[34px] w-7">
                            <path d="M10 3h6l9 23-8 4-2-5-6 1-2 6-5-3z" fill="#c92028" />
                            <path d="M16 3l9 23-8 4-5-16z" fill="#8d1118" />
                            <path d="M11 15l2-1 2 5-5 1z" fill="#f6b3b3" />
                            <path d="M10 3L2 29l5 3 5-20z" fill="#e2484b" />
                        </svg>
                        <Caret className="w-[6px] text-[#222]" />
                    </button>
                    <div className="min-w-0 flex-1">
                        <TitleBar />
                        <div className="flex h-[17px] items-stretch gap-px bg-[#333] pl-[5px] text-[#ececec]" role="tablist">
                            {menuTabs.map((tab) => (
                                <button
                                    key={tab}
                                    type="button"
                                    role="tab"
                                    aria-selected={tab === activeTab}
                                    onClick={() => setActiveTab(tab)}
                                    className={clsx(
                                        'px-[9px] leading-4 whitespace-nowrap',
                                        tab === activeTab && 'bg-[#efefef] text-[#222]',
                                    )}
                                >
                                    {tab}
                                </button>
                            ))}
                            <button type="button" aria-label="Minimize ribbon" className="ml-5 flex items-center gap-1.5">
                                <svg viewBox="0 0 12 6" className="h-1.5 w-3">
                                    <rect width="12" height="6" rx="1" fill="#eee" />
                                    <path d="M4 4l2-2 2 2z" fill="#333" />
                                </svg>
                                <Caret className="w-[5px]" />
                            </button>
                        </div>
                    </div>
                </header>
                <Ribbon />
                <div className="h-1.5 shrink-0 bg-[#666]" />
                <Viewport />
                <LayoutTabs />
                <CommandLine />
                <footer className="flex h-[19px] items-center justify-between bg-linear-to-b from-[#858585] to-[#6b6b6b] pl-1 font-['Liberation_Sans',sans-serif] text-[#151515]">
                    Press ESC or ENTER to exit, or right-click to display shortcut-menu.
                    <svg viewBox="0 0 10 10" className="mt-1 h-2.5 w-2.5">
                        <path d="M8 0h2v2H8zM4 4h2v2H4zM8 4h2v2H8zM0 8h2v2H0zM4 8h2v2H4zM8 8h2v2H8z" fill="#ddd" />
                    </svg>
                </footer>
            </div>
        </div>
    );
}
